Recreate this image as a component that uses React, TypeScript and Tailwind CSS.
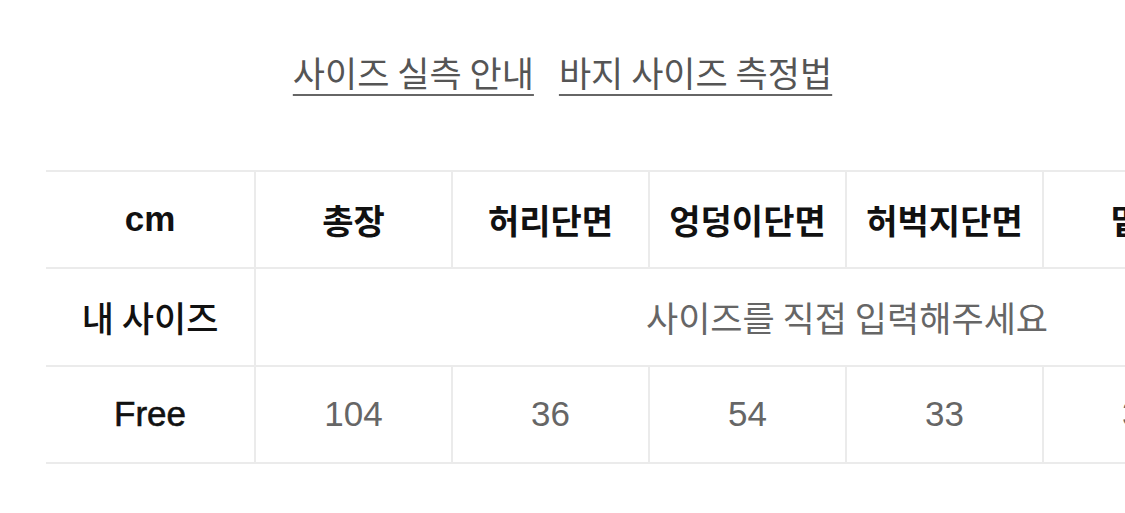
import React from 'react';

const KR = "font-['Noto_Sans_CJK_KR','Noto_Sans',sans-serif]";
const LATIN = "font-['Liberation_Sans','Noto_Sans_CJK_KR',sans-serif]";

const COLUMNS = [
  { label: '총장', value: '104' },
  { label: '허리단면', value: '36' },
  { label: '엉덩이단면', value: '54' },
  { label: '허벅지단면', value: '33' },
  { label: '밑위', value: '32' },
  { label: '밑단단면', value: '22' },
];

export default function App() {
  return (
    <div className="w-[1125px] h-[513px] overflow-hidden bg-white">
      <div className={`flex justify-center gap-[25px] pt-[50px] text-[35px] leading-[44px] text-[#555] ${KR}`}>
        <a className="underline decoration-[#666] decoration-2 underline-offset-[7px]">사이즈 실측 안내</a>
        <a className="underline decoration-[#666] decoration-2 underline-offset-[7px]">바지 사이즈 측정법</a>
      </div>

      <div className="ml-[46px] mt-[76px] w-max border-t-2 border-[#ebebeb]">
        <div className="grid grid-cols-[210px_repeat(6,197px)]">
          {/* header row */}
          <div className={`h-[97px] flex items-center justify-center border-r-2 border-b-2 border-[#ebebeb] text-[35px] font-bold text-[#111] ${LATIN}`}>
            cm
          </div>
          {COLUMNS.map((c) => (
            <div
              key={c.label}
              className={`h-[97px] flex items-center justify-center border-r-2 border-b-2 border-[#ebebeb] text-[34px] font-semibold text-[#111] ${KR}`}
            >
              {c.label}
            </div>
          ))}

          {/* my size row */}
          <div className={`h-[98px] flex items-center justify-center border-r-2 border-b-2 border-[#ebebeb] text-[35px] font-medium text-[#111] ${KR}`}>
            내 사이즈
          </div>
          <div className={`col-span-6 h-[98px] flex items-center justify-center border-b-2 border-[#ebebeb] text-[35px] text-[#666] ${KR}`}>
            사이즈를 직접 입력해주세요
          </div>

          {/* Free row */}
          <div className={`h-[97px] flex items-center justify-center border-r-2 border-b-2 border-[#ebebeb] text-[35px] text-[#111] [-webkit-text-stroke:0.6px_#111] ${LATIN}`}>
            Free
          </div>
          {COLUMNS.map((c) => (
            <div
              key={c.label}
              className={`h-[97px] flex items-center justify-center border-r-2 border-b-2 border-[#ebebeb] text-[35px] text-[#666] ${LATIN}`}
            >
              {c.value}
            </div>
          ))}
        </div>
      </div>
    </div>
  );
}
